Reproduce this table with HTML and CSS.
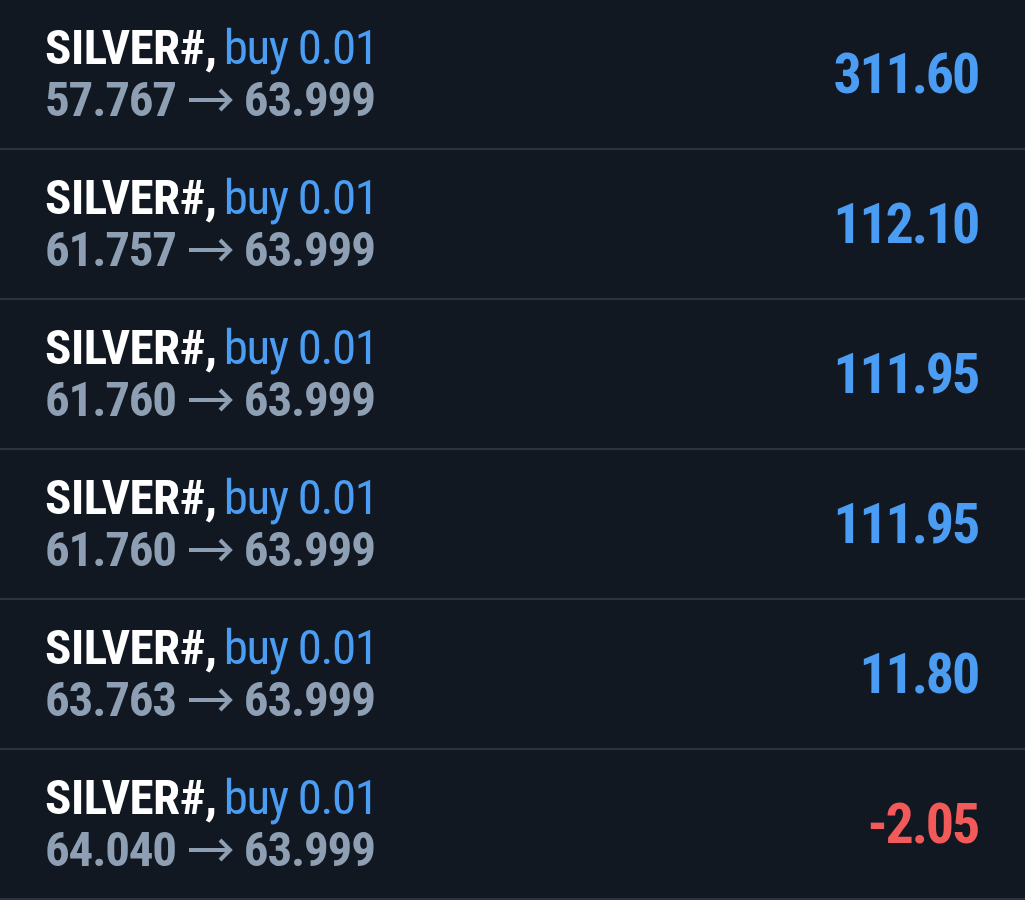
FILE: index.html
```html
<!DOCTYPE html>
<html>
<head>
<meta charset="utf-8">
<link rel="stylesheet" href="styles.css">
</head>
<body>
<div class="list">
  <div class="row">
    <div class="info">
      <div class="title"><span class="sym">SILVER#,</span> <span class="side">buy 0.01</span></div>
      <div class="prices"><span>57.767</span><svg class="arrow" viewBox="0 0 46 24"><path d="M1 12H42M32 2L42 12L32 22"/></svg><span>63.999</span></div>
    </div>
    <div class="profit pos">311.60</div>
  </div>
  <div class="row">
    <div class="info">
      <div class="title"><span class="sym">SILVER#,</span> <span class="side">buy 0.01</span></div>
      <div class="prices"><span>61.757</span><svg class="arrow" viewBox="0 0 46 24"><path d="M1 12H42M32 2L42 12L32 22"/></svg><span>63.999</span></div>
    </div>
    <div class="profit pos">112.10</div>
  </div>
  <div class="row">
    <div class="info">
      <div class="title"><span class="sym">SILVER#,</span> <span class="side">buy 0.01</span></div>
      <div class="prices"><span>61.760</span><svg class="arrow" viewBox="0 0 46 24"><path d="M1 12H42M32 2L42 12L32 22"/></svg><span>63.999</span></div>
    </div>
    <div class="profit pos">111.95</div>
  </div>
  <div class="row">
    <div class="info">
      <div class="title"><span class="sym">SILVER#,</span> <span class="side">buy 0.01</span></div>
      <div class="prices"><span>61.760</span><svg class="arrow" viewBox="0 0 46 24"><path d="M1 12H42M32 2L42 12L32 22"/></svg><span>63.999</span></div>
    </div>
    <div class="profit pos">111.95</div>
  </div>
  <div class="row">
    <div class="info">
      <div class="title"><span class="sym">SILVER#,</span> <span class="side">buy 0.01</span></div>
      <div class="prices"><span>63.763</span><svg class="arrow" viewBox="0 0 46 24"><path d="M1 12H42M32 2L42 12L32 22"/></svg><span>63.999</span></div>
    </div>
    <div class="profit pos">11.80</div>
  </div>
  <div class="row">
    <div class="info">
      <div class="title"><span class="sym">SILVER#,</span> <span class="side">buy 0.01</span></div>
      <div class="prices"><span>64.040</span><svg class="arrow" viewBox="0 0 46 24"><path d="M1 12H42M32 2L42 12L32 22"/></svg><span>63.999</span></div>
    </div>
    <div class="profit neg">-2.05</div>
  </div>
</div>
</body>
</html>
```
FILE: styles.css
```css
html, body {
  margin: 0;
  padding: 0;
  background: #111821;
}
body {
  font-family: "Roboto Condensed", Roboto, "Liberation Sans", sans-serif;
  font-stretch: condensed;
}
.list {
  display: flex;
  flex-direction: column;
}
.row {
  height: 148px;
  border-bottom: 2px solid #2b333d;
  display: flex;
  align-items: center;
  justify-content: space-between;
  padding: 0 45px;
}
.info {
  display: flex;
  flex-direction: column;
}
.title {
  font-size: 49px;
  line-height: 52px;
  white-space: nowrap;
  word-spacing: -4px;
}
.sym {
  color: #ffffff;
  font-weight: 700;
  letter-spacing: -0.5px;
}
.side {
  color: #4a9df3;
  letter-spacing: -1.4px;
  word-spacing: 0;
}
.prices {
  font-size: 49px;
  line-height: 52px;
  color: #8e9fb3;
  font-weight: 700;
  white-space: nowrap;
  letter-spacing: -1.2px;
  display: flex;
  align-items: center;
}
.arrow {
  width: 46px;
  height: 24px;
  margin: 0 10px 0 12px;
  fill: none;
  stroke: #8e9fb3;
  stroke-width: 4;
  flex: none;
}
.profit {
  font-size: 56px;
  font-weight: 700;
  letter-spacing: -2.2px;
  margin-right: 2px;
}
.pos { color: #4a9df3; }
.neg { color: #f25a5a; }
```
